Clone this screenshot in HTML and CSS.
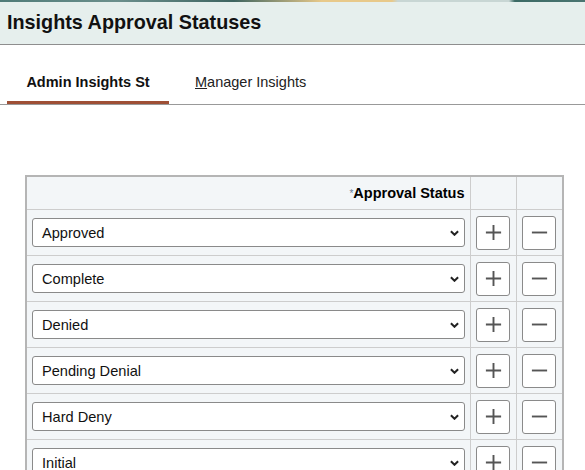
FILE: index.html
```html
<!DOCTYPE html>
<html>
<head>
<meta charset="utf-8">
<link rel="stylesheet" href="styles.css">
</head>
<body>
<div class="banner"></div>
<header class="header"><h1 class="title">Insights Approval Statuses</h1></header>
<nav class="tabs">
  <div class="tab active">Admin Insights St</div>
  <div class="tab"><span class="ul">M</span>anager Insights</div>
</nav>
<main class="content">
  <table class="grid">
    <colgroup><col class="w1"><col class="w2"><col class="w3"></colgroup>
    <thead>
      <tr>
        <th class="c1"><span class="req">*</span>Approval Status</th>
        <th class="c2"></th>
        <th class="c3"></th>
      </tr>
    </thead>
    <tbody>
      <tr><td class="c1"><div class="sel">Approved<svg class="chev" viewBox="0 0 10 6"><path d="M1 1l4 4 4-4" fill="none" stroke="#222" stroke-width="2.2"/></svg></div></td>
        <td class="c2"><button class="btn"><svg viewBox="0 0 20 20"><path d="M10 2v16M2 10h16" stroke="#555" stroke-width="2"/></svg></button></td>
        <td class="c3"><button class="btn"><svg viewBox="0 0 20 20"><path d="M2 10h16" stroke="#555" stroke-width="2"/></svg></button></td></tr>
      <tr><td class="c1"><div class="sel">Complete<svg class="chev" viewBox="0 0 10 6"><path d="M1 1l4 4 4-4" fill="none" stroke="#222" stroke-width="2.2"/></svg></div></td>
        <td class="c2"><button class="btn"><svg viewBox="0 0 20 20"><path d="M10 2v16M2 10h16" stroke="#555" stroke-width="2"/></svg></button></td>
        <td class="c3"><button class="btn"><svg viewBox="0 0 20 20"><path d="M2 10h16" stroke="#555" stroke-width="2"/></svg></button></td></tr>
      <tr><td class="c1"><div class="sel">Denied<svg class="chev" viewBox="0 0 10 6"><path d="M1 1l4 4 4-4" fill="none" stroke="#222" stroke-width="2.2"/></svg></div></td>
        <td class="c2"><button class="btn"><svg viewBox="0 0 20 20"><path d="M10 2v16M2 10h16" stroke="#555" stroke-width="2"/></svg></button></td>
        <td class="c3"><button class="btn"><svg viewBox="0 0 20 20"><path d="M2 10h16" stroke="#555" stroke-width="2"/></svg></button></td></tr>
      <tr><td class="c1"><div class="sel">Pending Denial<svg class="chev" viewBox="0 0 10 6"><path d="M1 1l4 4 4-4" fill="none" stroke="#222" stroke-width="2.2"/></svg></div></td>
        <td class="c2"><button class="btn"><svg viewBox="0 0 20 20"><path d="M10 2v16M2 10h16" stroke="#555" stroke-width="2"/></svg></button></td>
        <td class="c3"><button class="btn"><svg viewBox="0 0 20 20"><path d="M2 10h16" stroke="#555" stroke-width="2"/></svg></button></td></tr>
      <tr><td class="c1"><div class="sel">Hard Deny<svg class="chev" viewBox="0 0 10 6"><path d="M1 1l4 4 4-4" fill="none" stroke="#222" stroke-width="2.2"/></svg></div></td>
        <td class="c2"><button class="btn"><svg viewBox="0 0 20 20"><path d="M10 2v16M2 10h16" stroke="#555" stroke-width="2"/></svg></button></td>
        <td class="c3"><button class="btn"><svg viewBox="0 0 20 20"><path d="M2 10h16" stroke="#555" stroke-width="2"/></svg></button></td></tr>
      <tr><td class="c1"><div class="sel">Initial<svg class="chev" viewBox="0 0 10 6"><path d="M1 1l4 4 4-4" fill="none" stroke="#222" stroke-width="2.2"/></svg></div></td>
        <td class="c2"><button class="btn"><svg viewBox="0 0 20 20"><path d="M10 2v16M2 10h16" stroke="#555" stroke-width="2"/></svg></button></td>
        <td class="c3"><button class="btn"><svg viewBox="0 0 20 20"><path d="M2 10h16" stroke="#555" stroke-width="2"/></svg></button></td></tr>
    </tbody>
  </table>
</main>
</body>
</html>
```
FILE: styles.css
```css
html, body {
  margin: 0;
  padding: 0;
  background: #fff;
  font-family: "Liberation Sans", Arial, sans-serif;
  color: #000;
  overflow: hidden;
}
.banner {
  height: 2px;
  background: linear-gradient(90deg, #4f7b78 0%, #6b8f8c 20%, #3e6460 40%, #e8c98a 55%, #e8c98a 67%, #c8d6d4 68%, #c8d6d4 87%, #3c6a65 88%, #4a7571 100%);
}
.header {
  height: 42px;
  background: #e6efed;
  border-bottom: 1px solid #8e8e8e;
  display: flex;
  align-items: center;
  padding-left: 7px;
}
.title {
  margin: 0;
  font-size: 19.8px;
  font-weight: bold;
  color: #111;
  position: relative;
  top: -1px;
}
.tabs {
  display: flex;
  height: 59px;
  padding-left: 7px;
  border-bottom: 1px solid #999;
}
.tab {
  font-size: 14.5px;
  height: 59px;
  line-height: 74px;
  box-sizing: border-box;
  color: #222;
  padding-left: 26px;
}
.tab.active {
  font-weight: bold;
  color: #111;
  width: 162px;
  padding: 0;
  text-align: center;
  border-bottom: 3px solid #9e4f35;
}
.ul {
  text-decoration: underline;
}
.content {
  padding: 70px 0 0 25px;
}
.grid {
  border-collapse: collapse;
  border: 2px solid #b5b5b5;
  background: #f3f6f8;
  table-layout: fixed;
  width: 537px;
}
.w1 { width: 444px; }
.w2 { width: 46px; }
.w3 { width: 47px; }
.grid th, .grid td {
  padding: 0;
  border: 1px solid #cdcdcd;
}
.grid th {
  height: 32px;
  font-size: 14.5px;
  font-weight: bold;
  text-align: right;
  vertical-align: middle;
}
.grid th.c1 {
  padding-right: 5px;
}
.req {
  color: #6a7f99;
  font-size: 10px;
  font-weight: normal;
  vertical-align: 1px;
}
.grid td {
  height: 45px;
  vertical-align: middle;
}
.grid td.c1 {
  padding: 0 5px 0 5px;
}
.c2, .c3 {
  text-align: center;
}
.sel {
  height: 29px;
  box-sizing: border-box;
  border: 1px solid #8a8a8a;
  border-radius: 3px;
  background: #fff;
  display: flex;
  align-items: center;
  justify-content: space-between;
  padding: 0 5px 0 9px;
  font-size: 14.6px;
  color: #111;
}
.chev {
  width: 9px;
  height: 6px;
}
.btn {
  width: 34px;
  height: 34px;
  box-sizing: border-box;
  border: 1px solid #8a8a8a;
  border-radius: 3px;
  background: #fff;
  padding: 0;
  display: inline-flex;
  align-items: center;
  justify-content: center;
  vertical-align: middle;
}
.btn svg {
  width: 19px;
  height: 19px;
}
```
